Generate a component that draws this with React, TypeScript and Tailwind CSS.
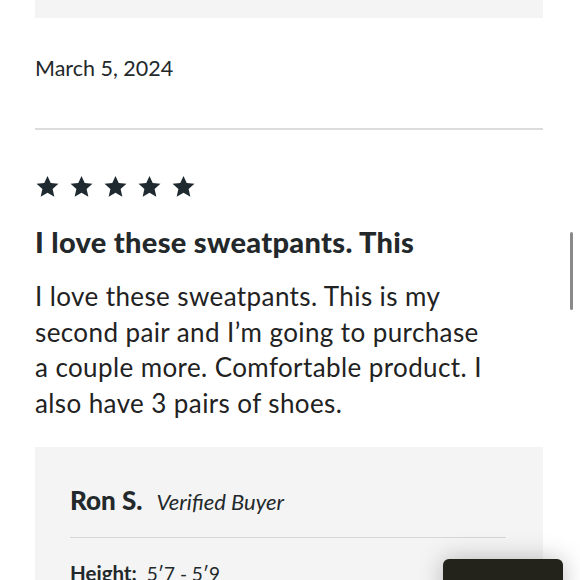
export default function App() {
  return (
    <div className="relative h-[580px] w-[580px] overflow-hidden bg-white font-['Lato',sans-serif] text-[#23282b]">
      <div className="ml-[35px] mr-[37px]">
        <div className="h-[18px] bg-[#f4f4f4]" />
        <div className="pt-[35px] text-[21.5px] leading-[30px]">March 5, 2024</div>
        <div className="mt-[45px] h-[2px] bg-[#dcdcdc]" />
        <div className="mt-[44px] flex gap-[9px]">
          {[0, 1, 2, 3, 4].map((i) => (
            <svg key={i} viewBox="0 0 24 24" className="h-[25px] w-[25px] fill-[#1f2a30]">
              <path d="M12 1.8l3.1 6.9 7.4.7-5.6 5 1.7 7.4L12 18l-6.6 3.8 1.7-7.4-5.6-5 7.4-.7z" />
            </svg>
          ))}
        </div>
        <h2 className="mt-[26px] text-[29px] font-black leading-[34px] tracking-[0.3px]">I love these sweatpants. This</h2>
        <p className="mt-[20px] text-[26px] leading-[35.5px] tracking-[0.4px] text-[#222]">
          I love these sweatpants. This is my
          <br />
          second pair and I’m going to purchase
          <br />
          a couple more. Comfortable product. I
          <br />
          also have 3 pairs of shoes.
        </p>
        <div className="mt-[26px] bg-[#f4f4f4] pl-[35px] pr-[37px] pt-[38px]">
          <div className="flex items-baseline gap-[14px]">
            <span className="text-[26px] font-black leading-[30px]">Ron S.</span>
            <span className="text-[22px] italic">Verified Buyer</span>
          </div>
          <div className="mt-[19px] h-[1px] bg-[#d6d6d6]" />
          <div className="mt-[22px] flex items-baseline gap-[10px] leading-[26px]">
            <span className="text-[20.5px] font-bold">Height:</span>
            <span className="text-[19px]">5′7 - 5′9</span>
          </div>
        </div>
      </div>
      <div className="absolute right-[7px] top-[232px] h-[78px] w-[3px] rounded-full bg-[#8a8a8a]" />
      <div className="absolute left-[443px] top-[559px] h-[40px] w-[120px] rounded-[6px] bg-[#23231c] shadow-[0_0_24px_rgba(0,0,0,0.25)]" />
    </div>
  );
}
